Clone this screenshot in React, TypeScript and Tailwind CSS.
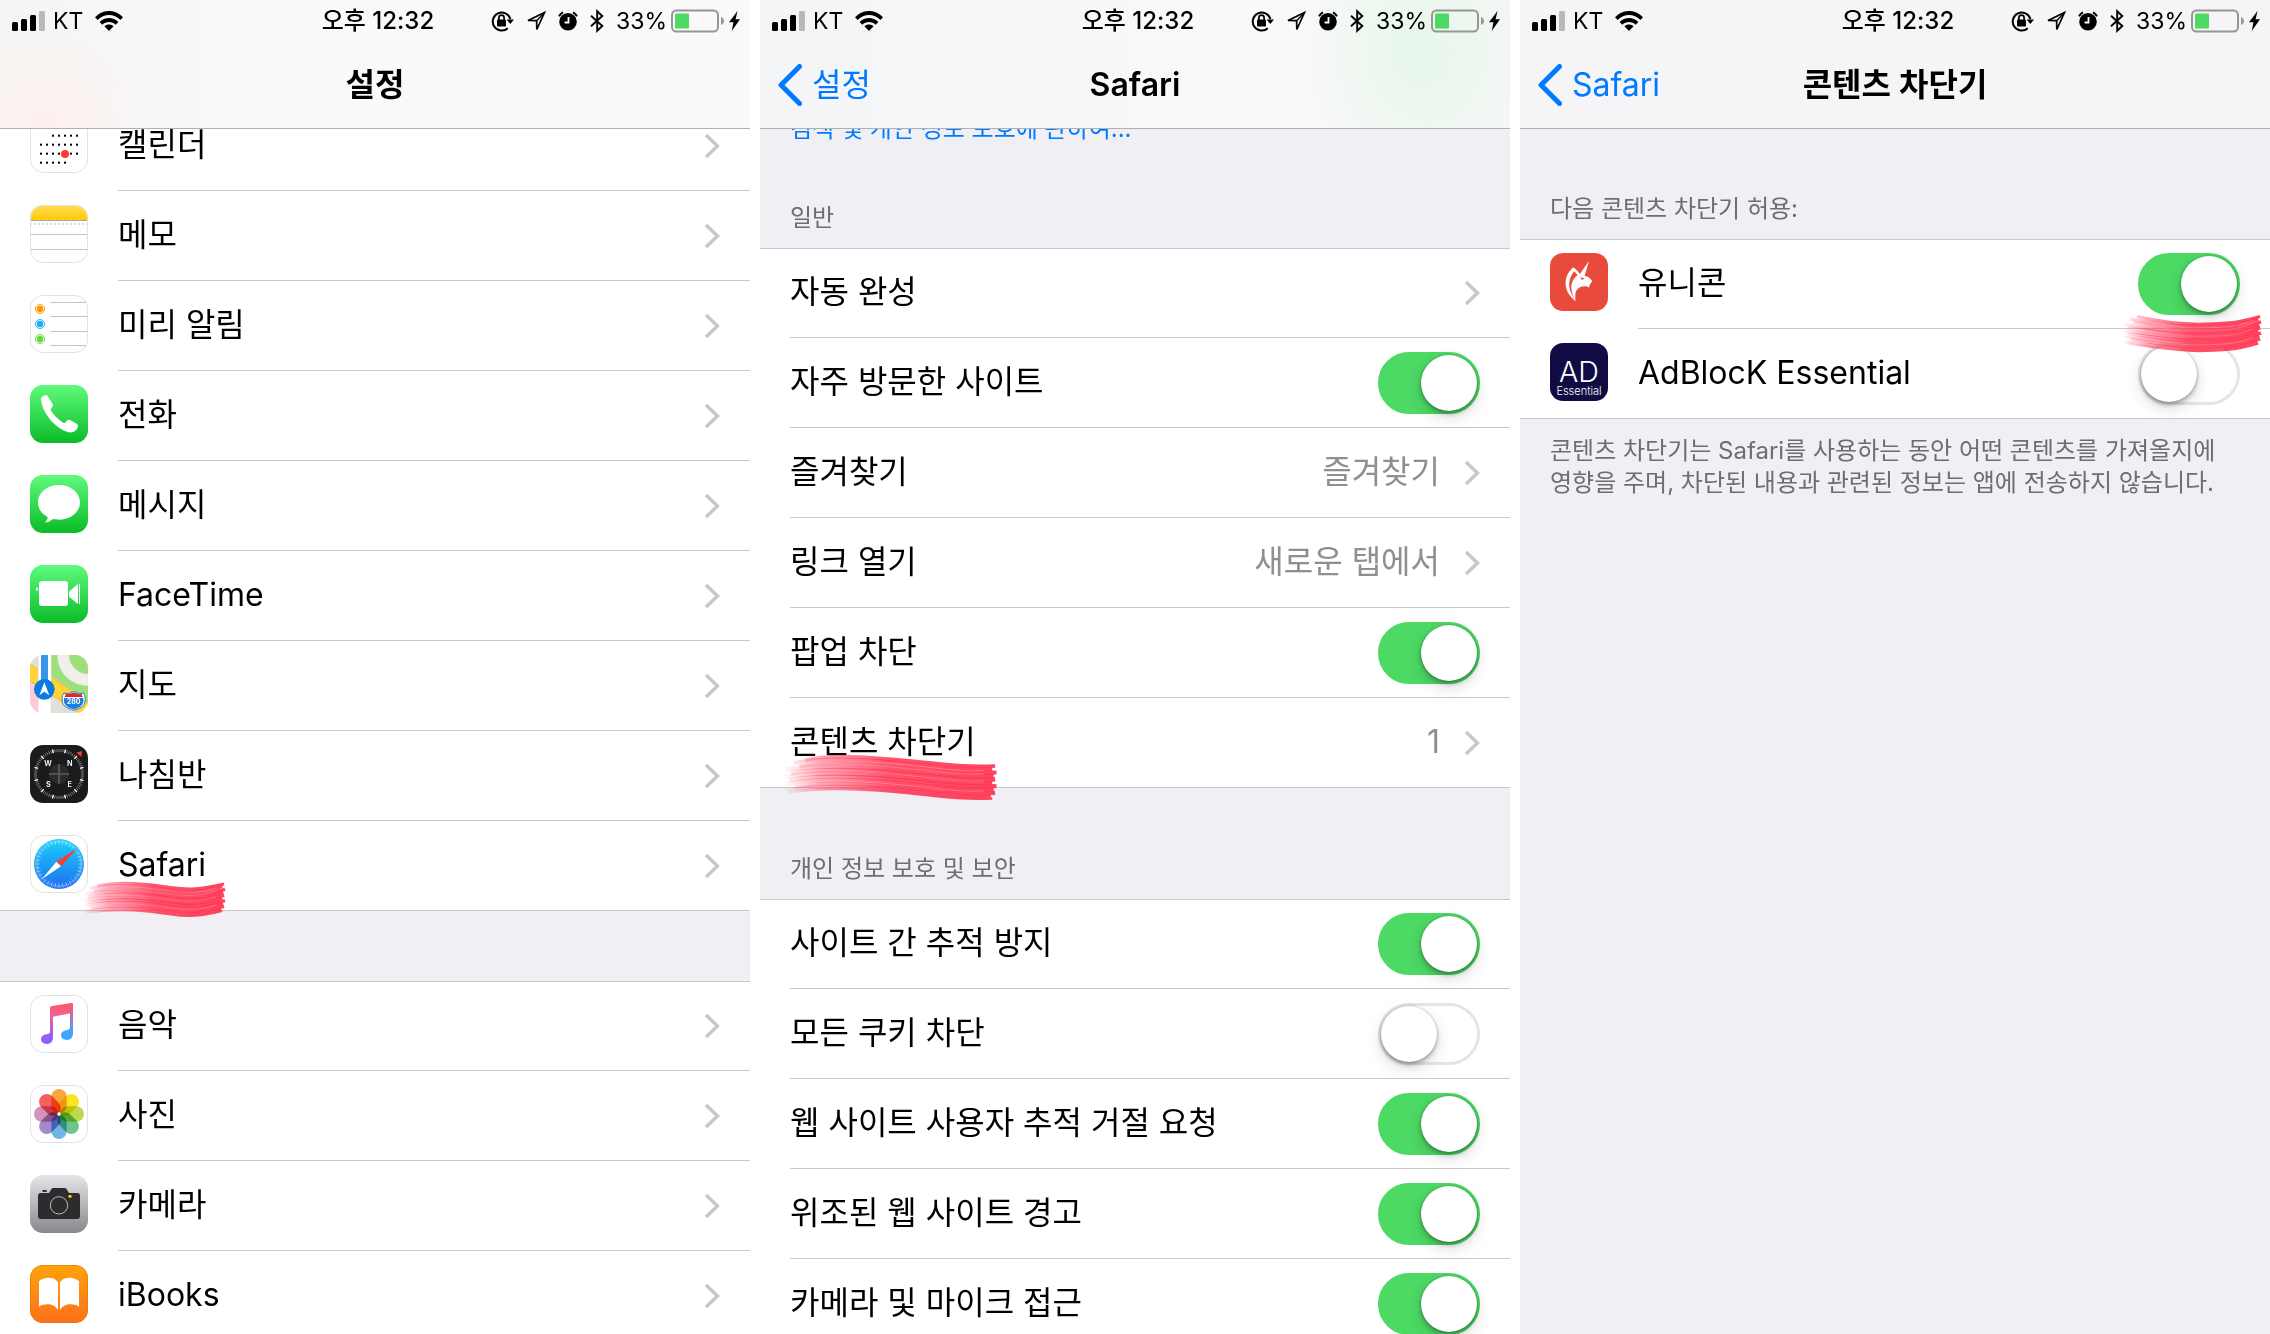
import React from "react";

const FONT = "font-['Inter','Noto_Sans_CJK_KR',sans-serif]";

/* ---------- status bar ---------- */

function SignalIcon() {
  return (
    <svg width="33" height="20" viewBox="0 0 33 20" aria-hidden="true">
      <rect x="0" y="11" width="6" height="9" rx="1.5" />
      <rect x="9" y="8" width="6" height="12" rx="1.5" />
      <rect x="18" y="4" width="6" height="16" rx="1.5" />
      <rect x="27" y="0" width="6" height="20" rx="1.5" fill="#b9b9b8" />
    </svg>
  );
}

function WifiIcon() {
  return (
    <svg width="28" height="20" viewBox="0 0 28 20" aria-hidden="true">
      <path d="M0 6.2C7.6-2.1 20.4-2.1 28 6.2l-2.7 2.8C19 2.4 9 2.4 2.7 9z" />
      <path d="M4.6 11c5.2-5.400 13.600-5.400 18.800 0l-2.700 2.800c-3.700-3.800-9.700-3.800-13.400 0z" />
      <path d="M9.400 15.300c2.600-2.500 6.600-2.500 9.200 0L14 20z" />
    </svg>
  );
}

function LockRotationIcon() {
  return (
    <svg width="23" height="22" viewBox="0 0 23 22" aria-hidden="true">
      <path d="M16.800 18.200A9 9 0 1 1 19.400 9" fill="none" stroke="#000" strokeWidth="2" />
      <path d="M15.600 9.500h7.400l-3.700 4.600z" />
      <rect x="6" y="9.500" width="9" height="7" rx="1" />
      <path d="M7.900 10V7.800a2.600 2.600 0 0 1 5.200 0V10" fill="none" stroke="#000" strokeWidth="1.700" />
    </svg>
  );
}

function LocationIcon() {
  return (
    <svg width="20" height="20" viewBox="0 0 20 20" aria-hidden="true">
      <path d="M18.500 1.500 2 9.500l8.600.2.200 8.800z" fill="none" stroke="#000" strokeWidth="1.700" />
      <path d="M18 2 10.500 10" stroke="#000" strokeWidth="1.200" />
    </svg>
  );
}

function AlarmIcon() {
  return (
    <svg width="20" height="20" viewBox="0 0 20 20" aria-hidden="true">
      <circle cx="10" cy="10.800" r="8.800" />
      <path d="M1 5.200A9 9 0 0 1 5 1.300M19 5.200a9 9 0 0 0-4-3.900" fill="none" stroke="#000" strokeWidth="2" />
      <path d="M10.500 6v5.500H6.600" fill="none" stroke="#fff" strokeWidth="1.800" />
    </svg>
  );
}

function BluetoothIcon() {
  return (
    <svg width="14" height="24" viewBox="0 0 14 24" aria-hidden="true">
      <path d="M1 6.800 12.300 17 7.200 21.800V2.200L12.300 7 1 17.200" fill="none" stroke="#000" strokeWidth="1.900" />
    </svg>
  );
}

function BatteryIcon() {
  return (
    <svg width="54" height="24" viewBox="0 0 54 24" aria-hidden="true">
      <rect x="1" y="1.500" width="46" height="21" rx="4.500" fill="none" stroke="#969696" strokeWidth="2" />
      <rect x="4" y="4.500" width="14" height="15" rx="1" fill="#4cd964" />
      <path d="M50 8c2 .8 3 2.300 3 4s-1 3.200-3 4z" fill="#969696" />
    </svg>
  );
}

function BoltIcon() {
  return (
    <svg width="11" height="20" viewBox="0 0 11 20" aria-hidden="true">
      <path d="M8.500 0 0 11.200h4.400L2.800 20 11 8.200H6.600z" />
    </svg>
  );
}

function StatusBar() {
  return (
    <div className="grid h-10 grid-cols-[1fr_auto_1fr] items-center pt-0.5 pl-3 pr-2.5 text-black">
      <div className="flex items-center gap-2">
        <SignalIcon />
        <span className="text-[23px] leading-8">KT</span>
        <span className="pl-1">
          <WifiIcon />
        </span>
      </div>
      <span className="pl-1 text-[24px] font-medium leading-8">오후 12:32</span>
      <div className="flex items-center justify-end">
        <span className="mr-3">
          <LockRotationIcon />
        </span>
        <span className="mr-3">
          <LocationIcon />
        </span>
        <span className="mr-3">
          <AlarmIcon />
        </span>
        <span className="mr-3">
          <BluetoothIcon />
        </span>
        <span className="mr-1 text-[23px] leading-8">33%</span>
        <span className="mr-1">
          <BatteryIcon />
        </span>
        <BoltIcon />
      </div>
    </div>
  );
}

/* ---------- shared pieces ---------- */

function Chevron() {
  return (
    <svg width="16" height="26" viewBox="0 0 16 26" fill="none" className="shrink-0" aria-hidden="true">
      <path d="M2 2 13.500 13 2 24" stroke="#c7c7cc" strokeWidth="3.500" />
    </svg>
  );
}

function Header({ title, back, tint }: { title: string; back?: string; tint: string }) {
  return (
    <header className={`relative z-10 border-b border-[#b0b0b3] ${tint}`}>
      <StatusBar />
      <div className="grid h-22 grid-cols-[1fr_auto_1fr] items-center px-[18px] pt-0.5">
        <div>
          {back && (
            <a href="#back" className="flex items-center gap-2.5 text-[32px] leading-10 text-[#007aff]">
              <svg width="24" height="42" viewBox="0 0 24 42" fill="none" aria-hidden="true">
                <path d="M21.500 2.500 3 21l18.500 18.500" stroke="#007aff" strokeWidth="5" strokeLinecap="round" strokeLinejoin="round" />
              </svg>
              <span>{back}</span>
            </a>
          )}
        </div>
        <h1 className="text-[32px] font-semibold leading-10 text-black">{title}</h1>
        <div />
      </div>
    </header>
  );
}

/* Each strand: left end, vertical centre, right end, thickness. */
const STRANDS: [number, number, number, number][] = [
  [16, 8, 148, 3.5],
  [8, 11, 146, 4],
  [12, 14.500, 149, 4],
  [2, 18, 147, 4.500],
  [6, 21.500, 148, 4.500],
  [0, 25, 146, 4.500],
  [5, 28, 149, 4],
  [3, 31.500, 147, 4.500],
  [9, 35, 148, 4],
  [2, 38, 145, 3.5],
  [4, 40.500, 146, 2.500],
];

type BrushShape = "wave" | "fall" | "rise";

function strand(shape: BrushShape, x0: number, y: number, x1: number) {
  if (shape === "wave") return `M${x0} ${y}C40 ${y - 6} 68 ${y - 2} 92 ${y + 2}S128 ${y + 3} ${x1} ${y - 2}`;
  if (shape === "fall") return `M${x0} ${y - 2}C32 ${y - 8} 62 ${y - 5} 90 ${y - 1}S124 ${y + 5} ${x1} ${y + 4}`;
  return `M${x0} ${y - 5}C32 ${y - 1} 58 ${y + 5} 88 ${y + 4}S126 ${y + 2} ${x1} ${y - 5}`;
}

function BrushMark({ id, shape, className }: { id: string; shape: BrushShape; className: string }) {
  return (
    <svg viewBox="0 0 150 48" preserveAspectRatio="none" fill="none" className={`pointer-events-none absolute overflow-visible ${className}`} aria-hidden="true">
      <defs>
        <linearGradient id={id} gradientUnits="userSpaceOnUse" x1="0" x2="150" y1="0" y2="0">
          <stop offset="0" stopColor="#ff3b5c" stopOpacity="0" />
          <stop offset="0.180" stopColor="#ff3b5c" stopOpacity="0.450" />
          <stop offset="0.500" stopColor="#ff3351" stopOpacity="0.850" />
          <stop offset="1" stopColor="#ff3351" stopOpacity="0.920" />
        </linearGradient>
      </defs>
      {STRANDS.map(([x0, y, x1, w]) => (
        <path key={y} d={strand(shape, x0, y, x1)} stroke={`url(#${id})`} strokeWidth={w} />
      ))}
      {[12.500, 16, 23, 33].map((y) => (
        <path key={y} d={strand(shape, 10, y, 140)} stroke="#fff" strokeWidth="0.900" opacity="0.280" />
      ))}
    </svg>
  );
}

function Toggle({ id, on }: { id: string; on: boolean }) {
  return (
    <input
      id={id}
      type="checkbox"
      role="switch"
      defaultChecked={on}
      className="relative h-[62px] w-[102px] shrink-0 appearance-none rounded-full border-[3px] border-[#e5e5e5] bg-white before:absolute before:left-0 before:top-0 before:size-14 before:rounded-full before:bg-white before:shadow-[0_3px_4px_rgba(0,0,0,0.25),0_6px_16px_rgba(0,0,0,0.15),0_0_2px_rgba(0,0,0,0.3)] checked:border-[#4cd964] checked:bg-[#4cd964] checked:before:left-10"
    />
  );
}

type RowProps = {
  label: string;
  icon?: React.ReactNode;
  value?: string;
  toggle?: boolean;
  id?: string;
  last?: boolean;
  mark?: React.ReactNode;
};

function Row({ label, icon, value, toggle, id, last, mark }: RowProps) {
  const isToggle = toggle !== undefined;
  const body = (
    <>
      {icon && <span className="mb-1 w-[88px] shrink-0">{icon}</span>}
      <span
        className={`flex h-full min-w-0 flex-1 items-center justify-between pr-[30px] ${last ? "" : "border-b border-[#c8c7cc]"}`}
      >
        {isToggle ? (
          <>
            <label htmlFor={id} className="pb-0.5 text-[32px] leading-10">
              {label}
            </label>
            <Toggle id={id!} on={toggle} />
          </>
        ) : (
          <>
            <span className="pb-0.5 text-[32px] leading-10">{label}</span>
            <span className="flex items-center gap-6">
              {value && <span className="pb-0.5 text-[32px] leading-10 text-[#8e8e93]">{value}</span>}
              <Chevron />
            </span>
          </>
        )}
      </span>
    </>
  );
  return (
    <li className={`relative ${last ? "border-b border-[#c8c7cc]" : ""}`}>
      {isToggle ? (
        <div className={`flex items-center pl-[30px] ${last ? "h-[89px]" : "h-[90px]"}`}>{body}</div>
      ) : (
        <a href={`#${label}`} className={`flex items-center pl-[30px] ${last ? "h-[89px]" : "h-[90px]"}`}>
          {body}
        </a>
      )}
      {mark}
    </li>
  );
}

function List({ children }: { children: React.ReactNode }) {
  return <ul className="bg-white text-black shadow-[inset_0_1px_0_#c8c7cc]">{children}</ul>;
}

/* ---------- app icons ---------- */

function Tile({ children, id, bg, outline }: { children: React.ReactNode; id: string; bg: string; outline?: boolean }) {
  return (
    <svg width="58" height="58" viewBox="0 0 174 174" className="block" aria-hidden="true">
      <defs>
        <clipPath id={`clip-${id}`}>
          <rect width="174" height="174" rx="39" />
        </clipPath>
        <linearGradient id="green" x1="0" x2="0" y1="0" y2="1">
          <stop offset="0" stopColor="#5ffa7c" />
          <stop offset="1" stopColor="#0bbb29" />
        </linearGradient>
      </defs>
      <g clipPath={`url(#clip-${id})`}>
        <rect width="174" height="174" fill={bg} />
        {children}
      </g>
      {outline && <rect x="1.500" y="1.500" width="171" height="171" rx="38" fill="none" stroke="#e2e2e4" strokeWidth="3" />}
    </svg>
  );
}

function CalendarIcon() {
  const rows = [
    { y: 62, xs: [69, 87, 105, 123, 141] },
    { y: 89, xs: [33, 51, 69, 87, 105, 123, 141] },
    { y: 116, xs: [33, 51, 69, 87, 105, 123, 141] },
    { y: 143, xs: [33, 51, 69, 87, 105] },
  ];
  return (
    <Tile id="calendar" bg="#fff" outline>
      {rows.map((r) => r.xs.map((x) => <rect key={`${x}-${r.y}`} x={x - 3} y={r.y - 3} width="6" height="6" />))}
      <circle cx="105" cy="117" r="12" fill="#ff3b30" />
    </Tile>
  );
}

function NotesIcon() {
  return (
    <Tile id="notes" bg="#fff" outline>
      <defs>
        <linearGradient id="notes-top" x1="0" x2="0" y1="0" y2="1">
          <stop offset="0" stopColor="#ffdc5a" />
          <stop offset="1" stopColor="#ffca05" />
        </linearGradient>
      </defs>
      <rect width="174" height="45" fill="url(#notes-top)" />
      <path d="M0 46.500h174" stroke="#a9a9ad" strokeWidth="3" />
      <path d="M0 57h174" stroke="#d4d4d6" strokeWidth="5" strokeDasharray="6 6" />
      <path d="M0 88.500h174M0 133.500h174" stroke="#c4c4c8" strokeWidth="3" />
    </Tile>
  );
}

function RemindersIcon() {
  return (
    <Tile id="reminders" bg="#fff" outline>
      <path d="M60 22.500h114M60 64.500h114M60 109.500h114M60 151.500h114" stroke="#c4c4c8" strokeWidth="3" />
      {[
        [42, "#ff9502"],
        [87, "#1badf8"],
        [132, "#63da38"],
      ].map(([y, c]) => (
        <g key={y}>
          <circle cx="30" cy={y} r="13.500" fill="none" stroke={c as string} strokeWidth="3" />
          <circle cx="30" cy={y} r="9.500" fill={c as string} />
        </g>
      ))}
    </Tile>
  );
}

function PhoneIcon() {
  return (
    <Tile id="phone" bg="url(#green)">
      <path
        d="M33 42C32 36 44 29 50 31c3 1 5 5 7 9l11 17c2 4 1 7-3 12-3 4-4 6-1 10 9 13 20 24 33 33 4 3 7 3 11-2 4-5 8-7 12-5l18 10c5 3 6 5 6 8 0 7-9 18-17 19-7 1-14 0-21-3C70 122 36 82 33 42z"
        fill="#fff"
      />
    </Tile>
  );
}

function MessagesIcon() {
  return (
    <Tile id="messages" bg="url(#green)">
      <path
        d="M87 30c35 0 63 23 63 52s-28 52-63 52c-6 0-13-1-18-2-7 6-15 10-24 11 5-6 8-11 8-17-18-9-29-25-29-44 0-29 28-52 63-52z"
        fill="#fff"
      />
    </Tile>
  );
}

function FaceTimeIcon() {
  return (
    <Tile id="facetime" bg="url(#green)">
      <rect x="27" y="48" width="87" height="75" rx="9" fill="#fff" />
      <path d="M117 80l27-24v61l-27-22z" fill="#fff" />
      <path d="M148.500 56v61" stroke="#fff" strokeWidth="3" />
      <path d="M23 66v12c-3-1-5-3-5-6s2-5 5-6z" fill="#fff" />
    </Tile>
  );
}

function MapsIcon() {
  return (
    <Tile id="maps" bg="#e2dfd8">
      <path d="M64 0h110v142L64 62z" fill="#9ddf7b" />
      <path d="M82 0c0 52 40 92 92 92V57c-31 0-57-26-57-57z" fill="#f2efe9" stroke="#d9d9c8" strokeWidth="1.500" />
      <path d="M0 75l24 14v85H0z" fill="#ffcad4" />
      <path d="M-4 22 24 44 64 66l110 76v20l-28 12-82-55L-4 76z" fill="#ffd436" stroke="#efae1b" strokeWidth="2.500" />
      <path d="M64 122l70 52H64z" fill="#e2dfd8" />
      <path d="M24 0h40v174H24z" fill="#fff" />
      <path d="M24 0v174M64 0v174" stroke="#cfcdc5" strokeWidth="2" />
      <path d="M33 0h21v90H33z" fill="#3796e6" />
      <circle cx="43" cy="103" r="31" fill="#0a7be0" />
      <path d="M43 82l15 39-15-11-15 11z" fill="#fff" />
      <path d="M102 114c9 3 16 2 22-3h14c6 5 13 6 22 3 8 10 6 23 4 30-3 12-16 16-33 22-17-6-30-10-33-22-2-7-4-20 4-30z" fill="#fff" stroke="#2175cf" strokeWidth="3" />
      <path d="M103 126c4-4 4-7 3-9 8 1 14 0 20-3h10c6 3 12 4 20 3-1 2-1 5 3 9z" fill="#e0252c" />
      <path d="M102 129h58c3 20-8 28-29 34-21-6-32-14-29-34z" fill="#1d7fdb" />
      <text x="131" y="147" textAnchor="middle" fontSize="21" fontWeight="700" fill="#fff" fontFamily="Inter, sans-serif">
        280
      </text>
    </Tile>
  );
}

function ticks(count: number, cx: number, cy: number, r1: number, r2: number) {
  return Array.from({ length: count }, (_, i) => {
    const a = (i / count) * Math.PI * 2;
    const c = Math.cos(a);
    const s = Math.sin(a);
    return `M${(cx + c * r1).toFixed(1)} ${(cy + s * r1).toFixed(1)}L${(cx + c * r2).toFixed(1)} ${(cy + s * r2).toFixed(1)}`;
  }).join("");
}

function CompassIcon() {
  return (
    <Tile id="compass" bg="#1b1b1c">
      <path d={ticks(72, 87, 87, 66, 75)} stroke="#b5b5b5" strokeWidth="2" />
      <path d={ticks(12, 87, 87, 65, 76)} stroke="#fff" strokeWidth="4" transform="rotate(15 87 87)" />
      <circle cx="87" cy="87" r="30" fill="#2b2b2c" />
      <path d="M87 57v60M57 87h60" stroke="#5d5d5e" strokeWidth="5" />
      <path d="M139 23l17-5-2 17z" fill="#ff3b30" />
      <g fill="#fff" fontSize="22" fontWeight="600" fontFamily="Inter, sans-serif" textAnchor="middle">
        <text x="54" y="63">W</text>
        <text x="119" y="63">N</text>
        <text x="55" y="126">S</text>
        <text x="119" y="126">E</text>
      </g>
    </Tile>
  );
}

function SafariIcon() {
  return (
    <Tile id="safari" bg="#fff" outline>
      <defs>
        <linearGradient id="safari-blue" x1="0" x2="0" y1="0" y2="1">
          <stop offset="0" stopColor="#1bd0fb" />
          <stop offset="1" stopColor="#1e6ff0" />
        </linearGradient>
      </defs>
      <circle cx="87" cy="87" r="75" fill="url(#safari-blue)" />
      <path d={ticks(72, 87, 87, 63, 71)} stroke="#fff" strokeWidth="1.500" opacity="0.8" />
      <path d={ticks(36, 87, 87, 58, 71)} stroke="#fff" strokeWidth="1.500" opacity="0.8" />
      <path d="M142 40 79 80l14 14z" fill="#ff3b30" />
      <path d="M36 132 79 80l14 14z" fill="#fff" />
    </Tile>
  );
}

function MusicIcon() {
  return (
    <Tile id="music" bg="#fff" outline>
      <defs>
        <linearGradient id="note-base" x1="0" x2="0" y1="0" y2="1">
          <stop offset="0.050" stopColor="#fd5a66" />
          <stop offset="0.300" stopColor="#f0609a" />
          <stop offset="0.900" stopColor="#8f5cff" />
        </linearGradient>
        <linearGradient id="note-right" gradientUnits="userSpaceOnUse" x1="0" x2="0" y1="24" y2="135">
          <stop offset="0.050" stopColor="#fd5a66" />
          <stop offset="0.400" stopColor="#b173c0" />
          <stop offset="0.750" stopColor="#3fa4fb" />
        </linearGradient>
      </defs>
      <path d="M60 40c0-4 2-6 6-7l58-9c4-1 5 1 5 5v24L69 65v62c0 13-8 20-18 20-11 0-18-6-18-14 0-9 6-13 14-15 10-2 13-3 13-11z" fill="url(#note-base)" />
      <path d="M120 30l9-3v88c0 13-8 20-18 20-11 0-18-6-18-14 0-9 6-13 14-15 10-2 13-3 13-11z" fill="url(#note-right)" />
    </Tile>
  );
}

function PhotosIcon() {
  const petals = ["#f9a63a", "#fbe51f", "#bcd952", "#6fc58c", "#6fb6e6", "#a08cc8", "#d492bd", "#f4605e"];
  return (
    <Tile id="photos" bg="#fff" outline>
      <g className="isolate">
        {petals.map((c, i) => (
          <rect key={c} x="64" y="12" width="46" height="73" rx="23" fill={c} className="mix-blend-multiply" transform={`rotate(${i * 45} 87 87)`} />
        ))}
      </g>
      <circle cx="87" cy="87" r="5" fill="#fff" />
    </Tile>
  );
}

function CameraIcon() {
  return (
    <Tile id="camera" bg="url(#camera-grey)">
      <defs>
        <linearGradient id="camera-grey" x1="0" x2="0" y1="0" y2="1">
          <stop offset="0" stopColor="#e6e5ea" />
          <stop offset="1" stopColor="#88878c" />
        </linearGradient>
      </defs>
      <path d="M32 54h24c4-2 5-7 8-11 2-3 4-4 8-4h30c4 0 6 1 8 4 3 4 4 9 8 11h24c5 0 8 3 8 8v62c0 5-3 8-8 8H32c-5 0-8-3-8-8V62c0-5 3-8 8-8z" fill="#2c2c2e" />
      <rect x="37" y="45" width="14" height="6" rx="3" fill="#2c2c2e" />
      <circle cx="87" cy="91" r="26" fill="none" stroke="#b9b9bb" strokeWidth="3" />
      <circle cx="120" cy="64" r="5" fill="#ffc800" />
    </Tile>
  );
}

function BooksIcon() {
  return (
    <Tile id="books" bg="url(#books-orange)">
      <defs>
        <linearGradient id="books-orange" x1="0" x2="0" y1="0" y2="1">
          <stop offset="0" stopColor="#ffa30a" />
          <stop offset="1" stopColor="#fc701c" />
        </linearGradient>
      </defs>
      <path d="M27 49c14-14 46-15 57 3v84c-10-21-40-22-57-11z" fill="#fff" />
      <path d="M147 49c-14-14-46-15-57 3v84c10-21 40-22 57-11z" fill="#fff" />
      <rect x="1" y="1" width="172" height="172" rx="38" fill="none" stroke="#d97a12" strokeWidth="3" opacity="0.700" />
    </Tile>
  );
}

function UnicornIcon() {
  return (
    <Tile id="unicorn" bg="#e84b3c">
      <path d="M117 24 89 64l14 7z" fill="#fff" />
      <path d="M70 43C50 60 44 82 48 102c3 16 14 32 30 43-10-14-18-28-20-44-2-18 5-34 15-46l10 12 8-2C85 56 78 48 70 43z" fill="#fff" />
      <path d="M88 64C72 72 63 88 64 106c1 14 6 28 14 39-4-16-3-30 6-38 7-6 15-8 22-7 5 0 8 2 11 4 1-8 5-13 10-19-3-6-8-8-12-13l-12-4z" fill="#fff" />
      <path d="M90 73l14 3-8 5z" fill="#e84b3c" />
    </Tile>
  );
}

function AdBlockIcon() {
  return (
    <Tile id="adblock" bg="#110b44">
      <g fill="#fff" textAnchor="middle" fontFamily="Inter, sans-serif" fontWeight="300">
        <text x="87" y="117" fontSize="86">AD</text>
        <text x="87" y="155" fontSize="33">Essential</text>
      </g>
    </Tile>
  );
}

/* ---------- screens ---------- */

function SettingsScreen() {
  return (
    <section className="flex min-w-0 flex-1 flex-col overflow-hidden bg-[#efeff4]">
      <Header title="설정" tint="bg-[radial-gradient(circle_at_6%_100%,#fdf0ef_0%,transparent_14%),linear-gradient(90deg,#f5f5f3,#f9f9f9_35%,#f9f9f9)]" />
      <main className="-mt-7">
        <List>
          <Row label="캘린더" icon={<CalendarIcon />} />
          <Row label="메모" icon={<NotesIcon />} />
          <Row label="미리 알림" icon={<RemindersIcon />} />
          <Row label="전화" icon={<PhoneIcon />} />
          <Row label="메시지" icon={<MessagesIcon />} />
          <Row label="FaceTime" icon={<FaceTimeIcon />} />
          <Row label="지도" icon={<MapsIcon />} />
          <Row label="나침반" icon={<CompassIcon />} />
          <Row
            label="Safari"
            icon={<SafariIcon />}
            last
            mark={<BrushMark id="mark-safari" shape="wave" className="left-[82px] top-[58px] h-10 w-[144px]" />}
          />
        </List>
        <div className="h-[70px]" />
        <List>
          <Row label="음악" icon={<MusicIcon />} />
          <Row label="사진" icon={<PhotosIcon />} />
          <Row label="카메라" icon={<CameraIcon />} />
          <Row label="iBooks" icon={<BooksIcon />} />
        </List>
      </main>
    </section>
  );
}

function GroupTitle({ children, className }: { children: React.ReactNode; className: string }) {
  return <h2 className={`flex items-end px-[30px] text-[24px] leading-8 text-[#6d6d72] ${className}`}>{children}</h2>;
}

function SafariScreen() {
  return (
    <section className="flex min-w-0 flex-1 flex-col overflow-hidden bg-[#efeff4]">
      <Header
        title="Safari"
        back="설정"
        tint="bg-[radial-gradient(110px_130px_at_88%_40%,#e6f6e9_0%,transparent_100%),linear-gradient(90deg,#f4f5f7,#f8f9f9_65%,#f5f7f6)]"
      />
      <main className="-mt-4">
        <a href="#privacy" className="block px-[30px] text-[24px] leading-8 text-[#007aff]">
          검색 및 개인 정보 보호에 관하여...
        </a>
        <GroupTitle className="h-[103px] pb-[14px]">일반</GroupTitle>
        <List>
          <Row label="자동 완성" />
          <Row label="자주 방문한 사이트" toggle={true} id="frequent" />
          <Row label="즐겨찾기" value="즐겨찾기" />
          <Row label="링크 열기" value="새로운 탭에서" />
          <Row label="팝업 차단" toggle={true} id="popup" />
          <Row
            label="콘텐츠 차단기"
            value="1"
            last
            mark={<BrushMark id="mark-blocker" shape="fall" className="left-[22px] top-[56px] h-12 w-[216px]" />}
          />
        </List>
        <GroupTitle className="h-[111px] pb-[14px]">개인 정보 보호 및 보안</GroupTitle>
        <List>
          <Row label="사이트 간 추적 방지" toggle={true} id="tracking" />
          <Row label="모든 쿠키 차단" toggle={false} id="cookies" />
          <Row label="웹 사이트 사용자 추적 거절 요청" toggle={true} id="dnt" />
          <Row label="위조된 웹 사이트 경고" toggle={true} id="fraud" />
          <Row label="카메라 및 마이크 접근" toggle={true} id="media" />
        </List>
      </main>
    </section>
  );
}

function BlockerScreen() {
  return (
    <section className="flex min-w-0 flex-1 flex-col overflow-hidden bg-[#efeff4]">
      <Header title="콘텐츠 차단기" back="Safari" tint="bg-[#f5f5f8]" />
      <main>
        <GroupTitle className="h-[110px] pb-[14px]">다음 콘텐츠 차단기 허용:</GroupTitle>
        <List>
          <Row
            label="유니콘"
            icon={<UnicornIcon />}
            toggle={true}
            id="unicorn"
            mark={<BrushMark id="mark-unicorn" shape="rise" className="right-2 top-[75px] z-10 h-10 w-[140px]" />}
          />
          <Row label="AdBlocK Essential" icon={<AdBlockIcon />} toggle={false} id="adblock" last />
        </List>
        <p className="break-keep px-[30px] pt-4 text-[24px] leading-8 text-[#6d6d72]">
          콘텐츠 차단기는 Safari를 사용하는 동안 어떤 콘텐츠를 가져올지에 영향을 주며, 차단된 내용과 관련된 정보는 앱에 전송하지 않습니다.
        </p>
      </main>
    </section>
  );
}

export default function App() {
  return (
    <div lang="ko" className={`flex h-screen gap-2.5 overflow-hidden bg-white ${FONT}`}>
      <SettingsScreen />
      <SafariScreen />
      <BlockerScreen />
    </div>
  );
}
